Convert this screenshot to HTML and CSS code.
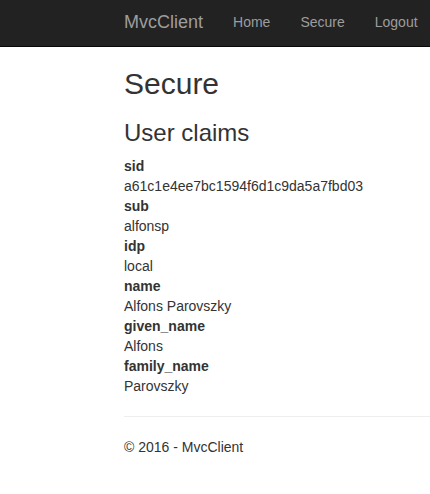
FILE: index.html
```html
<!DOCTYPE html>
<html>
<head>
<meta charset="utf-8">
<title>Secure - MvcClient</title>
<link rel="stylesheet" href="styles.css">
</head>
<body>
<div class="navbar">
  <div class="container nav-inner">
    <a class="brand" href="#">MvcClient</a>
    <ul class="nav">
      <li><a href="#">Home</a></li>
      <li><a href="#">Secure</a></li>
      <li><a href="#">Logout</a></li>
    </ul>
  </div>
</div>
<div class="container body-content">
  <h2>Secure</h2>
  <h3>User claims</h3>
  <dl>
    <dt>sid</dt>
    <dd>a61c1e4ee7bc1594f6d1c9da5a7fbd03</dd>
    <dt>sub</dt>
    <dd>alfonsp</dd>
    <dt>idp</dt>
    <dd>local</dd>
    <dt>name</dt>
    <dd>Alfons Parovszky</dd>
    <dt>given_name</dt>
    <dd>Alfons</dd>
    <dt>family_name</dt>
    <dd>Parovszky</dd>
  </dl>
  <hr>
  <footer>
    <p>&copy; 2016 - MvcClient</p>
  </footer>
</div>
</body>
</html>
```
FILE: styles.css
```css
html, body {
  margin: 0;
  padding: 0;
  overflow: hidden;
}
body {
  font-family: "Liberation Sans", Arial, Helvetica, sans-serif;
  font-size: 14px;
  line-height: 20px;
  color: #333;
  background: #fff;
}
.navbar {
  background: #222;
  border-bottom: 1px solid #080808;
  height: 46px;
}
.container {
  margin-left: 109px;
  padding: 0 0 0 15px;
}
.nav-inner {
  display: flex;
  align-items: flex-start;
}
.brand {
  font-size: 18px;
  line-height: 20px;
  padding-top: 12px;
  padding-right: 15px;
  color: #9d9d9d;
  text-decoration: none;
}
.nav {
  display: flex;
  list-style: none;
  margin: 0;
  padding: 0;
}
.nav a {
  display: block;
  padding: 12px 15px 14px;
  line-height: 20px;
  color: #9d9d9d;
  text-decoration: none;
}
h2 {
  font-size: 30px;
  font-weight: 500;
  line-height: 1.1;
  margin: 20px 0 10px;
}
h3 {
  font-size: 24px;
  font-weight: 500;
  line-height: 1.1;
  margin: 20px 0 10px;
}
dl {
  margin: 0 0 20px;
}
dt {
  font-weight: bold;
}
dd {
  margin: 0;
}
hr {
  margin: 20px 0;
  border: 0;
  border-top: 1px solid #eee;
  height: 0;
}
footer p {
  margin: 0 0 10px;
}
```
